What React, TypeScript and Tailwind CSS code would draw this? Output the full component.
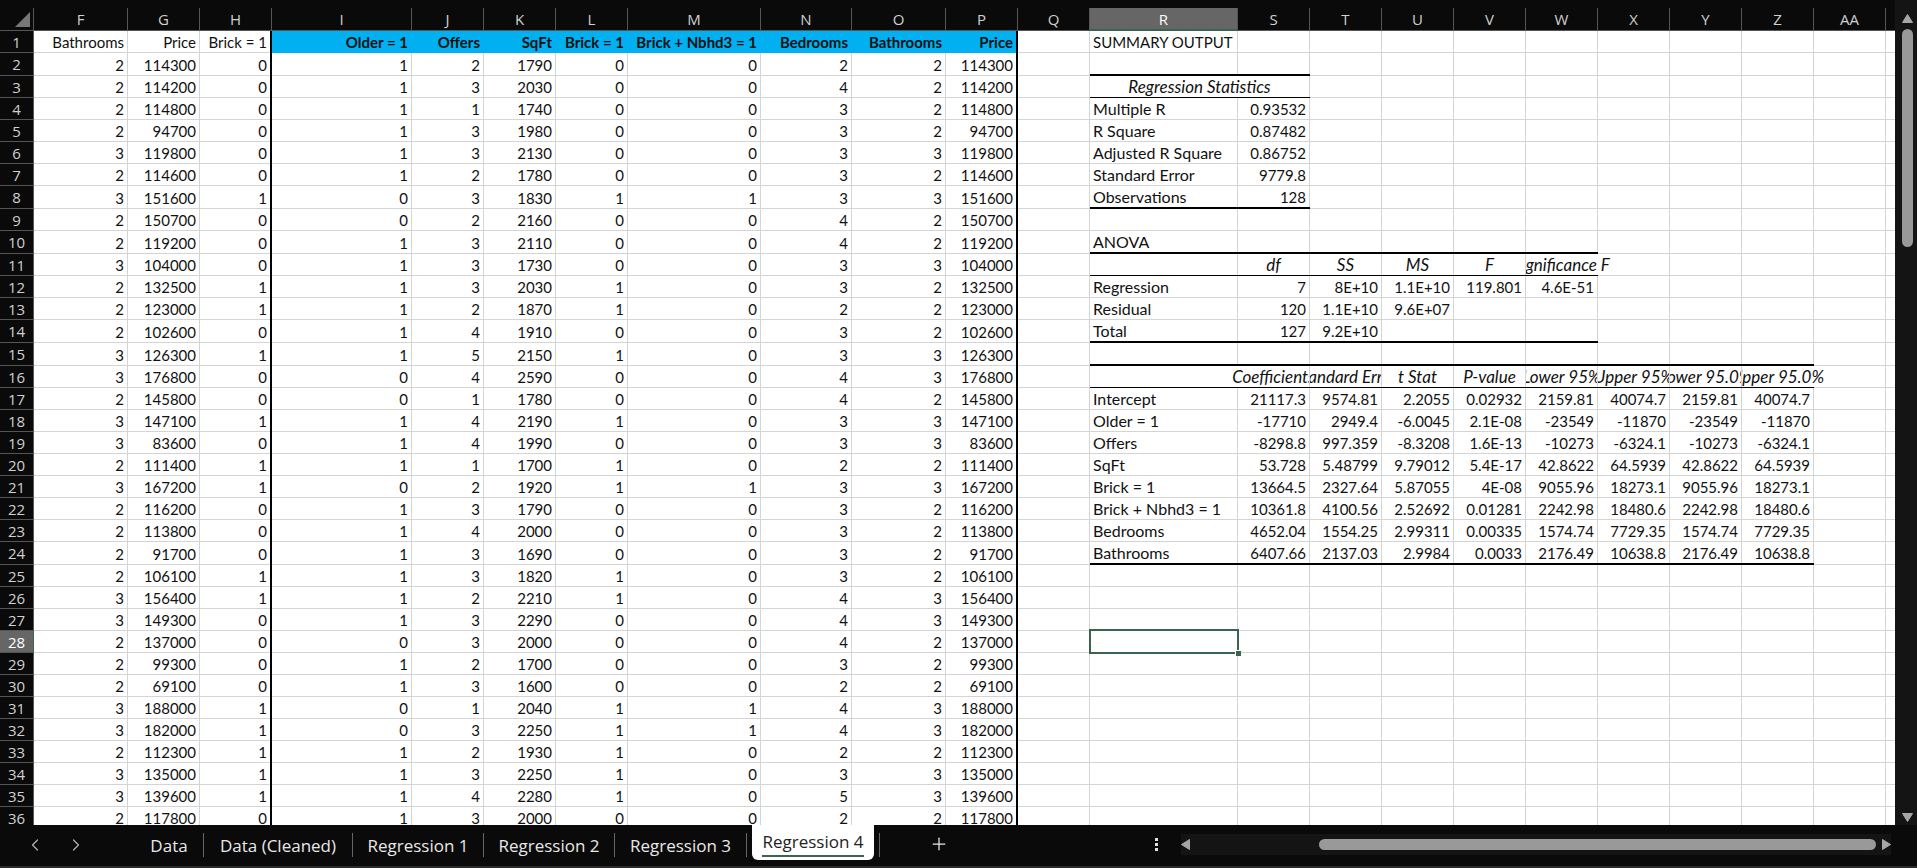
import React, { useState } from 'react';
import clsx from 'clsx';
import { ChevronLeft, ChevronRight, Plus } from 'lucide-react';

const COLUMNS = [
  { name: 'F', width: 'w-[94px]' },
  { name: 'G', width: 'w-[72px]' },
  { name: 'H', width: 'w-[72px]' },
  { name: 'I', width: 'w-[140px]' },
  { name: 'J', width: 'w-[72px]' },
  { name: 'K', width: 'w-[72px]' },
  { name: 'L', width: 'w-[72px]' },
  { name: 'M', width: 'w-[133px]' },
  { name: 'N', width: 'w-[91px]' },
  { name: 'O', width: 'w-[94px]' },
  { name: 'P', width: 'w-[72px]' },
  { name: 'Q', width: 'w-[72px]' },
  { name: 'R', width: 'w-[148px]' },
  { name: 'S', width: 'w-[72px]' },
  { name: 'T', width: 'w-[72px]' },
  { name: 'U', width: 'w-[72px]' },
  { name: 'V', width: 'w-[72px]' },
  { name: 'W', width: 'w-[72px]' },
  { name: 'X', width: 'w-[72px]' },
  { name: 'Y', width: 'w-[72px]' },
  { name: 'Z', width: 'w-[72px]' },
  { name: 'AA', width: 'w-[72px]' },
];

const TABLE_HEADINGS = [
  'Bathrooms', 'Price', 'Brick = 1', 'Older = 1', 'Offers', 'SqFt',
  'Brick = 1', 'Brick + Nbhd3 = 1', 'Bedrooms', 'Bathrooms', 'Price',
];

// bathrooms, price, brick, older, offers, sqft, brick + nbhd3, bedrooms
const HOUSES = [
  [2, 114300, 0, 1, 2, 1790, 0, 2],
  [2, 114200, 0, 1, 3, 2030, 0, 4],
  [2, 114800, 0, 1, 1, 1740, 0, 3],
  [2, 94700, 0, 1, 3, 1980, 0, 3],
  [3, 119800, 0, 1, 3, 2130, 0, 3],
  [2, 114600, 0, 1, 2, 1780, 0, 3],
  [3, 151600, 1, 0, 3, 1830, 1, 3],
  [2, 150700, 0, 0, 2, 2160, 0, 4],
  [2, 119200, 0, 1, 3, 2110, 0, 4],
  [3, 104000, 0, 1, 3, 1730, 0, 3],
  [2, 132500, 1, 1, 3, 2030, 0, 3],
  [2, 123000, 1, 1, 2, 1870, 0, 2],
  [2, 102600, 0, 1, 4, 1910, 0, 3],
  [3, 126300, 1, 1, 5, 2150, 0, 3],
  [3, 176800, 0, 0, 4, 2590, 0, 4],
  [2, 145800, 0, 0, 1, 1780, 0, 4],
  [3, 147100, 1, 1, 4, 2190, 0, 3],
  [3, 83600, 0, 1, 4, 1990, 0, 3],
  [2, 111400, 1, 1, 1, 1700, 0, 2],
  [3, 167200, 1, 0, 2, 1920, 1, 3],
  [2, 116200, 0, 1, 3, 1790, 0, 3],
  [2, 113800, 0, 1, 4, 2000, 0, 3],
  [2, 91700, 0, 1, 3, 1690, 0, 3],
  [2, 106100, 1, 1, 3, 1820, 0, 3],
  [3, 156400, 1, 1, 2, 2210, 0, 4],
  [3, 149300, 0, 1, 3, 2290, 0, 4],
  [2, 137000, 0, 0, 3, 2000, 0, 4],
  [2, 99300, 0, 1, 2, 1700, 0, 3],
  [2, 69100, 0, 1, 3, 1600, 0, 2],
  [3, 188000, 1, 0, 1, 2040, 1, 4],
  [3, 182000, 1, 0, 3, 2250, 1, 4],
  [2, 112300, 1, 1, 2, 1930, 0, 2],
  [3, 135000, 1, 1, 3, 2250, 0, 3],
  [3, 139600, 1, 1, 4, 2280, 0, 5],
  [2, 117800, 0, 1, 3, 2000, 0, 2],
];

// regression output, keyed by row, starting in column R
const SUMMARY: Record<number, string[]> = {
  1: ['SUMMARY OUTPUT'],
  3: ['Regression Statistics'],
  4: ['Multiple R', '0.93532'],
  5: ['R Square', '0.87482'],
  6: ['Adjusted R Square', '0.86752'],
  7: ['Standard Error', '9779.8'],
  8: ['Observations', '128'],
  10: ['ANOVA'],
  11: ['', 'df', 'SS', 'MS', 'F', 'Significance F'],
  12: ['Regression', '7', '8E+10', '1.1E+10', '119.801', '4.6E-51'],
  13: ['Residual', '120', '1.1E+10', '9.6E+07'],
  14: ['Total', '127', '9.2E+10'],
  16: ['', 'Coefficients', 'Standard Error', 't Stat', 'P-value', 'Lower 95%', 'Upper 95%', 'Lower 95.0%', 'Upper 95.0%'],
  17: ['Intercept', '21117.3', '9574.81', '2.2055', '0.02932', '2159.81', '40074.7', '2159.81', '40074.7'],
  18: ['Older = 1', '-17710', '2949.4', '-6.0045', '2.1E-08', '-23549', '-11870', '-23549', '-11870'],
  19: ['Offers', '-8298.8', '997.359', '-8.3208', '1.6E-13', '-10273', '-6324.1', '-10273', '-6324.1'],
  20: ['SqFt', '53.728', '5.48799', '9.79012', '5.4E-17', '42.8622', '64.5939', '42.8622', '64.5939'],
  21: ['Brick = 1', '13664.5', '2327.64', '5.87055', '4E-08', '9055.96', '18273.1', '9055.96', '18273.1'],
  22: ['Brick + Nbhd3 = 1', '10361.8', '4100.56', '2.52692', '0.01281', '2242.98', '18480.6', '2242.98', '18480.6'],
  23: ['Bedrooms', '4652.04', '1554.25', '2.99311', '0.00335', '1574.74', '7729.35', '1574.74', '7729.35'],
  24: ['Bathrooms', '6407.66', '2137.03', '2.9984', '0.0033', '2176.49', '10638.8', '2176.49', '10638.8'],
};

// how many columns from R a black rule runs under the row
const THICK_RULES: Record<number, number> = { 2: 2, 8: 2, 10: 6, 14: 6, 15: 9, 24: 9 };
const THIN_RULES: Record<number, number> = { 3: 2, 11: 6, 16: 9 };

const FIRST_SUMMARY_COL = 12;
const SELECTED_ROW = 28;
const SELECTED_COL = 12;

const SHEETS = [
  { name: 'Data', width: 'w-[69px]' },
  { name: 'Data (Cleaned)', width: 'w-[149px]' },
  { name: 'Regression 1', width: 'w-[131px]' },
  { name: 'Regression 2', width: 'w-[131px]' },
  { name: 'Regression 3', width: 'w-[132px]' },
  { name: 'Regression 4', width: 'w-[133px]' },
];

const cellText = (row: number, col: number) => {
  if (col >= FIRST_SUMMARY_COL) return SUMMARY[row]?.[col - FIRST_SUMMARY_COL] ?? '';
  if (col > 10) return '';
  if (row === 1) return TABLE_HEADINGS[col];
  const [baths, price, brick, older, offers, sqft, brickNbhd, beds] = HOUSES[row - 2];
  return [baths, price, brick, older, offers, sqft, brick, brickNbhd, beds, baths, price][col];
};

// black rules use the real border and the grey grid line beside them an inset
// shadow, so the corners are not mitred
const cellLines = (row: number, col: number) => {
  const offset = col - FIRST_SUMMARY_COL;
  const isBlue = row === 1 && col >= 3 && col <= 10;
  if (col === 2) return 'border-r-2 border-black pb-px shadow-[inset_0_-1px_0_#d4d4d4]';
  if (col === 10) return clsx('border-r-2 border-black pb-px', !isBlue && 'shadow-[inset_0_-1px_0_#d4d4d4]');
  if (isBlue) return 'border-r border-b border-[#00b0f0]';
  if (offset >= 0 && offset < (THICK_RULES[row] ?? 0)) {
    return 'border-b-2 border-black pr-px shadow-[inset_-1px_0_0_#d4d4d4]';
  }
  if (offset >= 0 && offset < (THIN_RULES[row] ?? 0)) {
    const open = (row === 16 && (offset === 0 || offset === 8)) || (row === 11 && offset === 5);
    return clsx('border-b border-black pr-px', !open && 'shadow-[inset_-1px_0_0_#d4d4d4]');
  }
  return 'border-r border-b border-[#d4d4d4]';
};

const Cell: React.FC<{ row: number; col: number }> = ({ row, col }) => {
  const offset = col - FIRST_SUMMARY_COL;
  const isBlue = row === 1 && col >= 3 && col <= 10;
  const isItalic = offset >= 0 && (row === 3 || row === 11 || row === 16);
  const isLabel = offset === 0 && row > 1;
  const isSelected = row === SELECTED_ROW && col === SELECTED_COL;
  const spillsLeft = row === 16 && offset === 1;
  const spillsRight = (row === 11 && offset === 5) || (row === 16 && offset === 8);

  return (
    <td
      colSpan={row === 3 && offset === 0 ? 2 : 1}
      className={clsx(
        isSelected && 'relative',
        isBlue ? 'bg-[#00b0f0] font-bold' : 'font-normal',
        isItalic ? 'text-[17px] italic' : isLabel ? 'text-base' : 'text-[15px]',
        cellLines(row, col)
      )}
    >
      <div
        className={clsx(
          'flex h-[21px] items-center pt-px leading-5 whitespace-nowrap',
          isItalic ? 'justify-center overflow-hidden' : offset === 0 ? 'justify-start px-[3px]' : 'justify-end px-[3px]',
          spillsLeft && '-ml-6 pl-6',
          spillsRight && '-mr-6 pr-6'
        )}
      >
        {cellText(row, col)}
      </div>
      {isSelected && (
        <div className="absolute -top-[2px] -right-[2px] -bottom-[2px] -left-[1px] border-2 border-[#3b6350]">
          <div className="absolute -right-[4px] -bottom-[4px] h-[6px] w-[6px] border-t border-l border-white bg-[#3b6350]" />
        </div>
      )}
    </td>
  );
};

const Grid = () => (
  <table className="w-full table-fixed border-separate border-spacing-0 bg-white font-['Lato','Liberation_Sans',sans-serif] text-[15px] leading-5 text-[#111]">
    <colgroup>
      <col className="w-[34px]" />
      {COLUMNS.map((c) => (
        <col key={c.name} className={c.width} />
      ))}
      <col />
    </colgroup>
    <thead>
      <tr className="bg-[#0a0a0a] font-['Open_Sans','Noto_Sans',sans-serif] text-[#d0d0d0]">
        <th className="p-0 pt-2">
          <div className="flex h-[23px] items-center justify-end border-r border-b border-[#555] pr-[3px]">
            <svg width="15" height="15" viewBox="0 0 15 15" aria-hidden="true">
              <path d="M15 0V15H0Z" fill="#777" />
            </svg>
          </div>
        </th>
        {COLUMNS.map((c, i) => (
          <th key={c.name} scope="col" className="p-0 pt-2 font-normal">
            <div
              className={clsx(
                'flex h-[23px] items-center justify-center border-r border-r-[#555]',
                i === SELECTED_COL ? 'border-b-2 border-b-[#3b6350] bg-[#666] text-white' : 'border-b border-b-[#555]'
              )}
            >
              {c.name}
            </div>
          </th>
        ))}
        <th className="p-0 pt-2">
          <div className="h-[23px] border-b border-[#555]" />
        </th>
      </tr>
    </thead>
    <tbody>
      {Array.from({ length: 36 }, (_, i) => i + 1).map((row) => (
        <tr key={row} className={THICK_RULES[row] ? 'h-[23px]' : 'h-[22px]'}>
          <th
            scope="row"
            className={clsx(
              "border-r border-b border-b-[#555] p-0 font-['Open_Sans','Noto_Sans',sans-serif] font-normal",
              row === SELECTED_ROW ? 'border-r-[#3b6350] bg-[#666] text-white' : 'border-r-[#555] bg-[#0a0a0a] text-[#d0d0d0]'
            )}
          >
            {row}
          </th>
          {COLUMNS.map((c, col) => (row === 3 && col === 13 ? null : <Cell key={c.name} row={row} col={col} />))}
          <td className="border-b border-b-[#d4d4d4] p-0" />
        </tr>
      ))}
    </tbody>
  </table>
);

const VerticalScrollbar = () => (
  <div className="flex w-[22px] shrink-0 flex-col items-center bg-[#141414] pt-[14px] pb-[3px] pl-[3px]">
    <button aria-label="Scroll up">
      <svg className="block" width="11" height="9" viewBox="0 0 11 9">
        <path d="M5.5 0.5L10.5 8.5H0.5Z" fill="#a6a6a6" stroke="#a6a6a6" strokeLinejoin="round" />
      </svg>
    </button>
    <div className="my-[6px] w-[11px] flex-1">
      <div className="h-[28%] rounded-full bg-[#999]" />
    </div>
    <button aria-label="Scroll down">
      <svg className="block" width="11" height="9" viewBox="0 0 11 9">
        <path d="M5.5 8.5L0.5 0.5H10.5Z" fill="#a6a6a6" stroke="#a6a6a6" strokeLinejoin="round" />
      </svg>
    </button>
  </div>
);

const HorizontalScrollbar = () => (
  <div className="flex h-[21px] flex-1 items-center gap-[6px] bg-[#141414]">
    <button aria-label="Scroll left">
      <svg className="block" width="9" height="11" viewBox="0 0 9 11">
        <path d="M0.5 5.5L8.5 0.5V10.5Z" fill="#a6a6a6" stroke="#a6a6a6" strokeLinejoin="round" />
      </svg>
    </button>
    <div className="flex flex-1 justify-end">
      <div className="h-[11px] w-[82%] rounded-full bg-[#999]" />
    </div>
    <button aria-label="Scroll right">
      <svg className="block" width="9" height="11" viewBox="0 0 9 11">
        <path d="M8.5 5.5L0.5 0.5V10.5Z" fill="#a6a6a6" stroke="#a6a6a6" strokeLinejoin="round" />
      </svg>
    </button>
  </div>
);

const App: React.FC = () => {
  const [activeSheet, setActiveSheet] = useState('Regression 4');

  return (
    <div className="flex h-screen flex-col overflow-hidden bg-[#0a0a0a]">
      <div className="flex min-h-0 flex-1">
        <main className="min-w-0 flex-1 overflow-hidden">
          <Grid />
        </main>
        <VerticalScrollbar />
      </div>

      <footer className="flex h-[43px] shrink-0 border-b-2 border-[#2a2a2a] bg-[#0a0a0a] font-['Open_Sans','Noto_Sans',sans-serif] text-[17px] text-[#e8e8e8]">
        <div className="flex w-[135px] shrink-0 items-center gap-[21px] pb-[2px] pl-[25px] text-[#b0b0b0]">
          <button aria-label="Previous sheet">
            <ChevronLeft size={20} strokeWidth={1.5} />
          </button>
          <button aria-label="Next sheet">
            <ChevronRight size={20} strokeWidth={1.5} />
          </button>
        </div>

        <nav className="flex shrink-0">
          {SHEETS.map((sheet) => {
            const active = sheet.name === activeSheet;
            return (
              <div key={sheet.name} className={clsx('flex shrink-0 justify-between', sheet.width)}>
                <button
                  onClick={() => setActiveSheet(sheet.name)}
                  className={clsx(
                    'whitespace-nowrap',
                    active ? 'ml-[5px] h-[35px] w-[122px] rounded-b-md bg-white pb-[2px] text-[#222]' : 'flex-1'
                  )}
                >
                  <span className={active ? 'border-b-2 border-[#3b6350] pb-[2px] font-medium' : ''}>{sheet.name}</span>
                </button>
                <div className="mt-2 h-6 w-px bg-[#666]" />
              </div>
            );
          })}
        </nav>

        <button aria-label="New sheet" className="ml-[49px] flex h-[37px] items-center">
          <Plus size={20} strokeWidth={1.5} />
        </button>

        <div className="ml-auto flex h-[39px] w-[40%] items-center pr-[26px] pl-[5px]">
          <button aria-label="Resize tab bar" className="mr-[23px] flex flex-col gap-[2px]">
            <span className="h-[3px] w-[3px] bg-[#e0e0e0]" />
            <span className="h-[3px] w-[3px] bg-[#e0e0e0]" />
            <span className="h-[3px] w-[3px] bg-[#e0e0e0]" />
          </button>
          <HorizontalScrollbar />
        </div>
      </footer>
    </div>
  );
};

export default App;
